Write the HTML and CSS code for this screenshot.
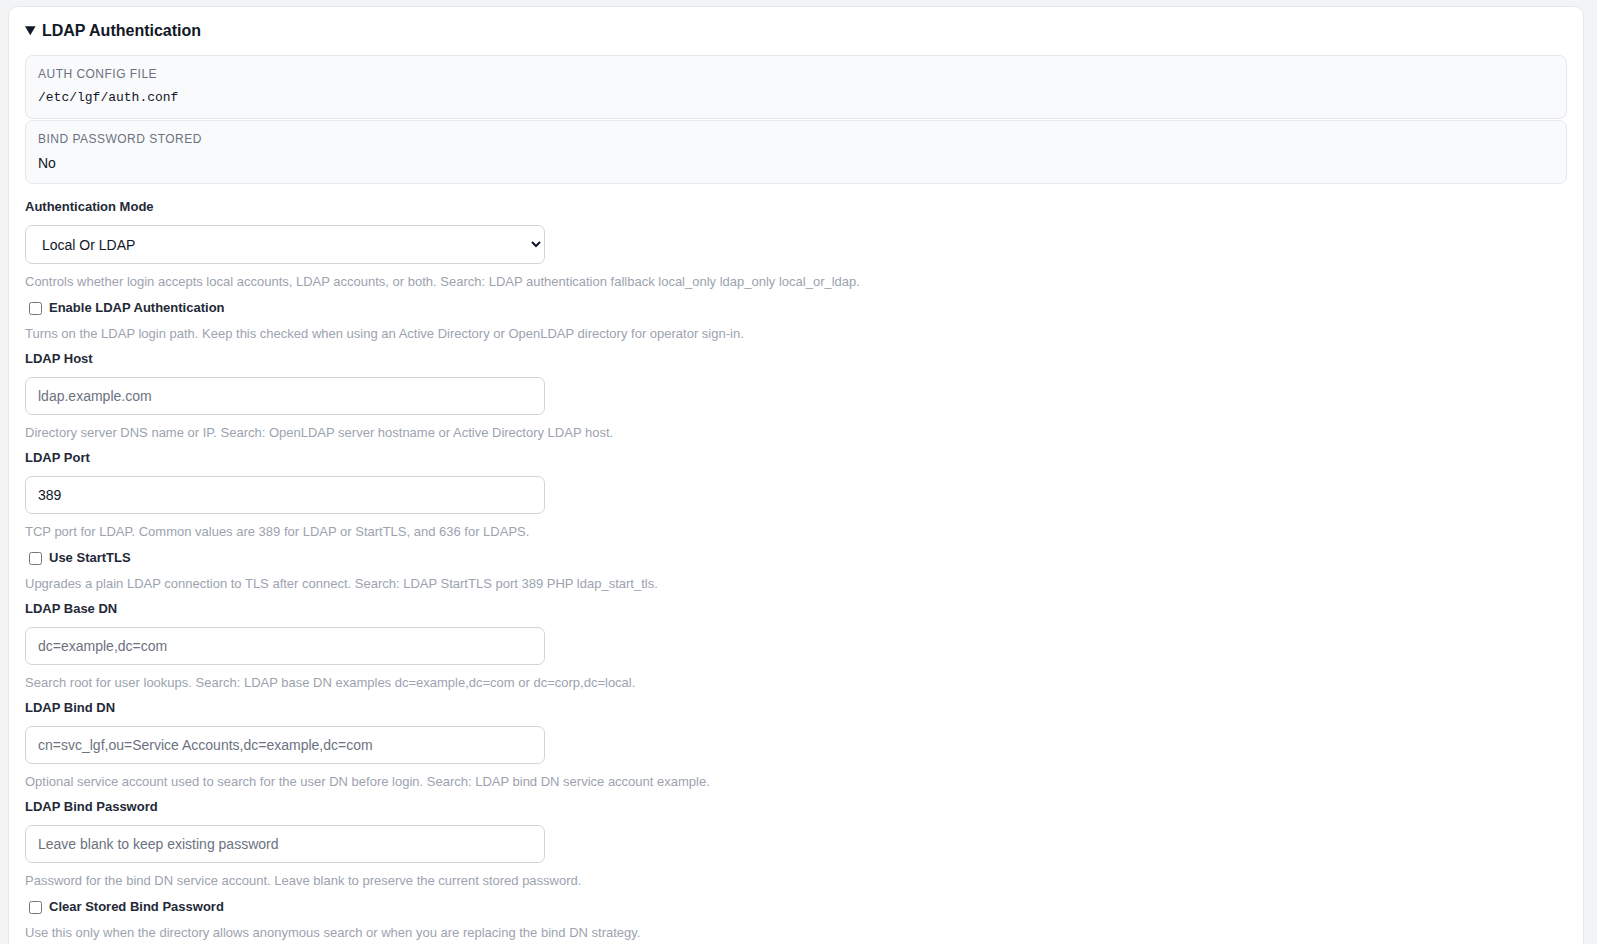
FILE: index.html
```html
<!DOCTYPE html>
<html>
<head>
  <title>LDAP Authentication</title>
  <link rel="stylesheet" href="styles.css">
</head>
<body>
  <div class="card">
    <details open>
      <summary>LDAP Authentication</summary>

      <div class="info-list">
        <div class="info">
          <div class="info-label">Auth Config File</div>
          <div class="info-value mono">/etc/lgf/auth.conf</div>
        </div>
        <div class="info">
          <div class="info-label">Bind Password Stored</div>
          <div class="info-value">No</div>
        </div>
      </div>

      <div class="field">
        <label for="auth-mode">Authentication Mode</label>
        <select id="auth-mode" class="select">
          <option>Local Only</option>
          <option>LDAP Only</option>
          <option selected>Local Or LDAP</option>
        </select>
        <p class="hint">Controls whether login accepts local accounts, LDAP accounts, or both. Search: LDAP authentication fallback local_only ldap_only local_or_ldap.</p>
      </div>

      <div class="field">
        <label class="check"><input type="checkbox"> Enable LDAP Authentication</label>
        <p class="hint hint-check">Turns on the LDAP login path. Keep this checked when using an Active Directory or OpenLDAP directory for operator sign-in.</p>
      </div>

      <div class="field">
        <label for="ldap-host">LDAP Host</label>
        <input type="text" id="ldap-host" class="text" placeholder="ldap.example.com">
        <p class="hint">Directory server DNS name or IP. Search: OpenLDAP server hostname or Active Directory LDAP host.</p>
      </div>

      <div class="field">
        <label for="ldap-port">LDAP Port</label>
        <input type="number" id="ldap-port" class="text" value="389">
        <p class="hint">TCP port for LDAP. Common values are 389 for LDAP or StartTLS, and 636 for LDAPS.</p>
      </div>

      <div class="field">
        <label class="check"><input type="checkbox"> Use StartTLS</label>
        <p class="hint hint-check">Upgrades a plain LDAP connection to TLS after connect. Search: LDAP StartTLS port 389 PHP ldap_start_tls.</p>
      </div>

      <div class="field">
        <label for="ldap-base">LDAP Base DN</label>
        <input type="text" id="ldap-base" class="text" placeholder="dc=example,dc=com">
        <p class="hint">Search root for user lookups. Search: LDAP base DN examples dc=example,dc=com or dc=corp,dc=local.</p>
      </div>

      <div class="field">
        <label for="ldap-bind">LDAP Bind DN</label>
        <input type="text" id="ldap-bind" class="text" placeholder="cn=svc_lgf,ou=Service Accounts,dc=example,dc=com">
        <p class="hint">Optional service account used to search for the user DN before login. Search: LDAP bind DN service account example.</p>
      </div>

      <div class="field">
        <label for="ldap-pass">LDAP Bind Password</label>
        <input type="password" id="ldap-pass" class="text" placeholder="Leave blank to keep existing password">
        <p class="hint">Password for the bind DN service account. Leave blank to preserve the current stored password.</p>
      </div>

      <div class="field">
        <label class="check"><input type="checkbox"> Clear Stored Bind Password</label>
        <p class="hint hint-check">Use this only when the directory allows anonymous search or when you are replacing the bind DN strategy.</p>
      </div>
    </details>
  </div>
</body>
</html>
```

FILE: styles.css
```css
body { margin: 0; padding: 6px 13px 20px 8px; background: #f3f4f6; font-family: "Liberation Sans", Arial, sans-serif; color: #1f2937; }
.card { background: #fff; border: 1px solid #e5e7eb; border-radius: 10px; padding: 13px 16px 24px; }

summary { font-size: 16px; font-weight: bold; line-height: 22px; color: #111827; cursor: pointer; margin-bottom: 13px; }

.info-list { margin-bottom: 14px; }
.info { background: #f9fafb; border: 1px solid #e5e7eb; border-radius: 8px; padding: 10px 12px; margin-bottom: 1px; }
.info-label { font-size: 12px; line-height: 16px; text-transform: uppercase; letter-spacing: .04em; color: #6b7280; }
.info-value { font-size: 14px; line-height: 20px; margin-top: 6px; color: #111827; }
.mono { font-family: "Liberation Mono", "Courier New", monospace; font-size: 13px; }

.field { margin-bottom: 7px; }
.field > label { display: block; font-size: 13px; font-weight: bold; line-height: 18px; margin-bottom: 9px; color: #1f2937; }
.text, .select { display: block; width: 520px; box-sizing: border-box; height: 38px; padding: 0 12px; border: 1px solid #d1d5db; border-radius: 7px; background: #fff; font-family: "Liberation Sans", Arial, sans-serif; font-size: 14px; color: #111827; }
.select { height: 39px; }
.text::placeholder { color: #6b7280; }
.hint { margin: 9px 0 0; font-size: 13px; line-height: 18px; color: #9ca3af; }

.field > label.check { display: flex; align-items: center; gap: 7px; height: 20px; margin: 6px 0 0; }
.check input { margin: 0 0 0 4px; width: 13px; height: 13px; }
.hint-check { margin-top: 7px; }
```
